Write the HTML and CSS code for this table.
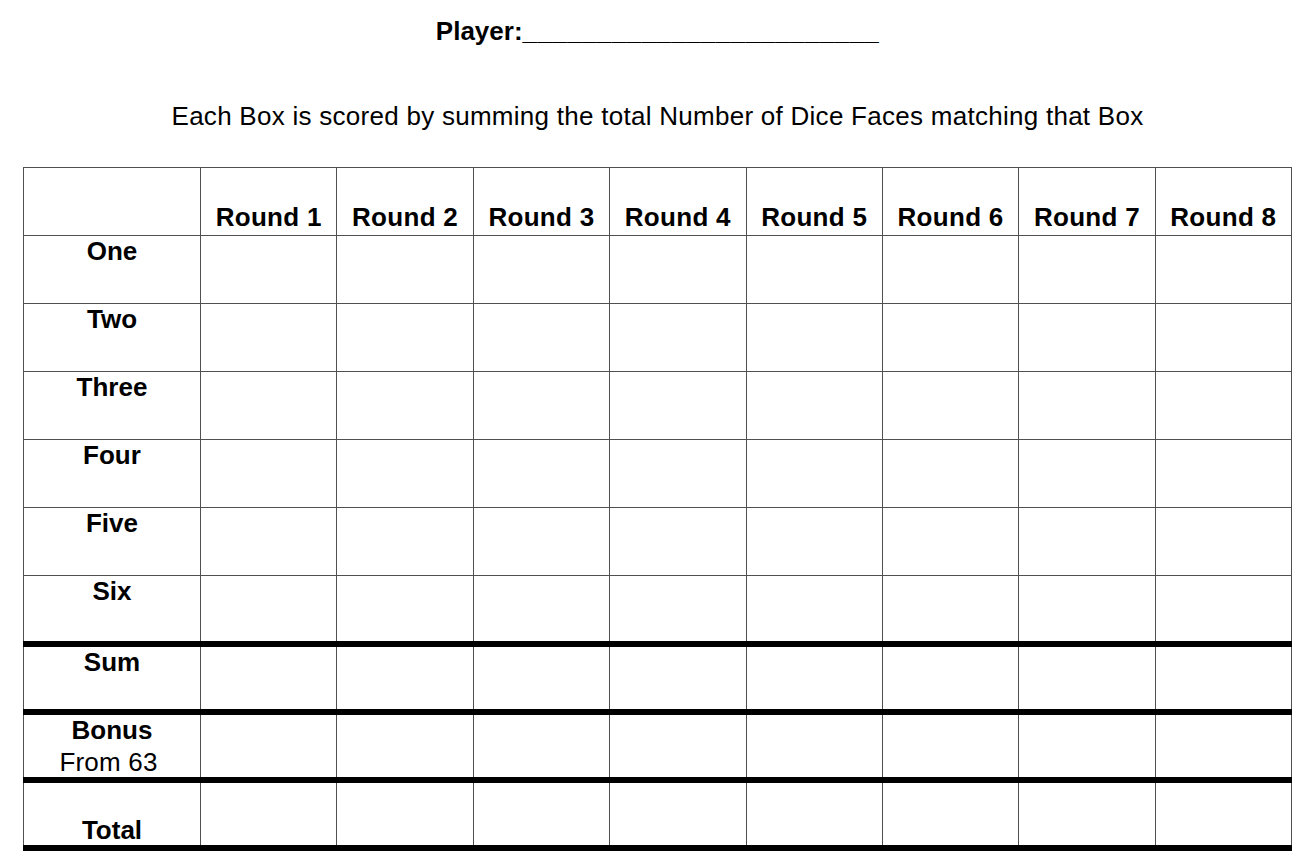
FILE: index.html
```html
<!DOCTYPE html>
<html lang="en">
<head>
<meta charset="utf-8">
<title>Score Sheet</title>
<link rel="stylesheet" href="styles.css">
</head>
<body>
<div class="page">
  <h1 class="player">Player:<span class="blank">________________________</span></h1>
  <p class="note">Each Box is scored by summing the total Number of Dice Faces matching that Box</p>
  <table class="sheet">
    <colgroup>
      <col class="c-label">
      <col><col><col><col><col><col><col><col>
    </colgroup>
    <thead>
      <tr class="head">
        <th class="corner"></th>
        <th>Round 1</th><th>Round 2</th><th>Round 3</th><th>Round 4</th>
        <th>Round 5</th><th>Round 6</th><th>Round 7</th><th>Round 8</th>
      </tr>
    </thead>
    <tbody>
      <tr><th class="label">One</th><td></td><td></td><td></td><td></td><td></td><td></td><td></td><td></td></tr>
      <tr><th class="label">Two</th><td></td><td></td><td></td><td></td><td></td><td></td><td></td><td></td></tr>
      <tr><th class="label">Three</th><td></td><td></td><td></td><td></td><td></td><td></td><td></td><td></td></tr>
      <tr><th class="label">Four</th><td></td><td></td><td></td><td></td><td></td><td></td><td></td><td></td></tr>
      <tr><th class="label">Five</th><td></td><td></td><td></td><td></td><td></td><td></td><td></td><td></td></tr>
      <tr class="thick"><th class="label">Six</th><td></td><td></td><td></td><td></td><td></td><td></td><td></td><td></td></tr>
      <tr class="thick"><th class="label">Sum</th><td></td><td></td><td></td><td></td><td></td><td></td><td></td><td></td></tr>
      <tr class="thick"><th class="label"><div>Bonus</div><div class="sub">From 63</div></th><td></td><td></td><td></td><td></td><td></td><td></td><td></td><td></td></tr>
      <tr class="thick"><th class="label total">Total</th><td></td><td></td><td></td><td></td><td></td><td></td><td></td><td></td></tr>
    </tbody>
  </table>
</div>
</body>
</html>
```

FILE: styles.css
```css
html, body {
  margin: 0;
  padding: 0;
  background: #ffffff;
}

body {
  font-family: "Liberation Sans", Arial, sans-serif;
  color: #000000;
}

.page {
  width: 1269px;
  padding: 16px 0 0 23px;
}

.player {
  margin: 0;
  font-size: 26px;
  line-height: 30px;
  font-weight: bold;
  text-align: center;
}

.blank {
  letter-spacing: 0.4px;
}

.note {
  margin: 55px 0 0 0;
  font-size: 26px;
  line-height: 30px;
  letter-spacing: 0.27px;
  text-align: center;
}

.sheet {
  margin-top: 36px;
  width: 1269px;
  table-layout: fixed;
  border-collapse: collapse;
}

.c-label {
  width: 177px;
}

.sheet th,
.sheet td {
  border: 1px solid #505050;
  padding: 0;
  font-size: 26px;
  line-height: 30px;
  text-align: center;
}

.sheet tr {
  height: 68px;
}

.head th {
  vertical-align: bottom;
  padding-bottom: 3px;
  font-weight: bold;
  letter-spacing: 0.3px;
}

.label {
  vertical-align: top;
  font-weight: bold;
  padding-top: 2px;
}

.label .sub {
  font-weight: normal;
  margin: 2px 7px 0 0;
  letter-spacing: 0.2px;
}

.label.total {
  vertical-align: bottom;
  padding-top: 0;
}

.thick th,
.thick td {
  border-bottom: 6px solid #000000;
}
```
